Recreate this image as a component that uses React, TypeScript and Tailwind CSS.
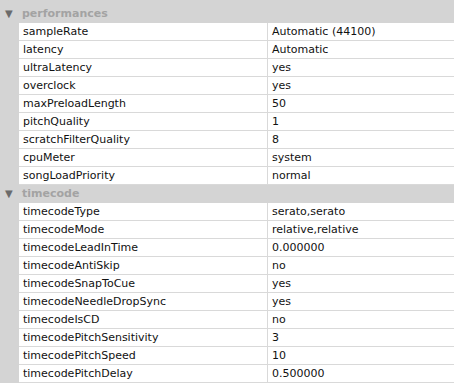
import React from 'react';

type Section = { name: string; rows: [string, string][] };

const sections: Section[] = [
  { name: 'automix', rows: [] },
  {
    name: 'performances',
    rows: [
      ['sampleRate', 'Automatic (44100)'],
      ['latency', 'Automatic'],
      ['ultraLatency', 'yes'],
      ['overclock', 'yes'],
      ['maxPreloadLength', '50'],
      ['pitchQuality', '1'],
      ['scratchFilterQuality', '8'],
      ['cpuMeter', 'system'],
      ['songLoadPriority', 'normal'],
    ],
  },
  {
    name: 'timecode',
    rows: [
      ['timecodeType', 'serato,serato'],
      ['timecodeMode', 'relative,relative'],
      ['timecodeLeadInTime', '0.000000'],
      ['timecodeAntiSkip', 'no'],
      ['timecodeSnapToCue', 'yes'],
      ['timecodeNeedleDropSync', 'yes'],
      ['timecodeIsCD', 'no'],
      ['timecodePitchSensitivity', '3'],
      ['timecodePitchSpeed', '10'],
      ['timecodePitchDelay', '0.500000'],
    ],
  },
];

const SectionHeader = ({ name }: { name: string }) => (
  <div className="flex h-[18px] items-center bg-[#d4d4d4]">
    <span className="w-[22px] pl-[5px] text-[10px] leading-none text-[#6b6b6b]">▼</span>
    <span className="text-[11px] font-bold text-[#a3a3a3]">{name}</span>
  </div>
);

const App = () => {
  return (
    <div
      className="h-[391px] w-[454px] overflow-hidden bg-white text-[11px] text-[#111]"
      style={{ fontFamily: '"Lucida Grande", "DejaVu Sans", sans-serif' }}
    >
      <div className="-mt-[13px]">
        {sections.map((s) => (
          <div key={s.name}>
            <SectionHeader name={s.name} />
            {s.rows.map(([k, v]) => (
              <div key={k} className="flex h-[18px]">
                <div className="w-[19px] shrink-0 bg-[#d4d4d4]" />
                <div className="flex flex-1 border-b border-[#d9d9d9]">
                  <div className="flex w-[248px] items-center pl-[4px] pt-px">{k}</div>
                  <div className="flex flex-1 items-center border-l border-[#d9d9d9] pl-[4px] pt-px">{v}</div>
                </div>
              </div>
            ))}
          </div>
        ))}
        <div className="h-[18px] border-b border-[#ececec]" />
      </div>
    </div>
  );
};

export default App;
